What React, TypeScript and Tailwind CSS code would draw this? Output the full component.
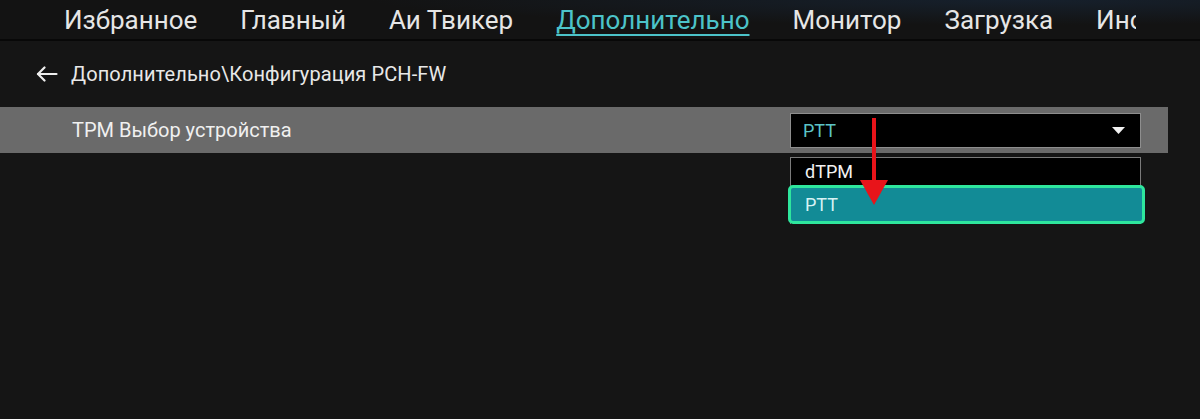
const tabs = [
  { label: "Избранное" },
  { label: "Главный" },
  { label: "Аи Твикер" },
  { label: "Дополнительно", active: true },
  { label: "Монитор" },
  { label: "Загрузка" },
  { label: "Инструменты" },
];

const options = ["dTPM", "PTT"];

export default function App() {
  const selected = "PTT";

  return (
    <div className="relative h-[419px] w-[1200px] overflow-hidden bg-[#151515] font-['Roboto','Noto_Sans',sans-serif] text-[#e8e8e8]">
      {/* Top menu */}
      <header className="h-[41px] border-b-2 border-[#080808] bg-[radial-gradient(ellipse_at_85%_0%,#16202c_0%,#131313_45%)]">
        <nav className="flex h-full w-[1136px] items-center gap-[43px] overflow-hidden whitespace-nowrap pl-[64px] text-[26px] leading-none">
          {tabs.map((tab) => (
            <span
              key={tab.label}
              className={
                tab.active
                  ? "text-[#4cc3c9] underline decoration-2 underline-offset-[5px]"
                  : "text-[#e6e6e6]"
              }
            >
              {tab.label}
            </span>
          ))}
        </nav>
      </header>

      {/* Breadcrumb */}
      <div className="flex h-[66px] items-center pl-[36px] text-[20px] tracking-[0.1px]">
        <svg className="mr-[13px]" width="22" height="16" viewBox="0 0 22 16" fill="none" stroke="#eeeeee" strokeWidth="2.2" strokeLinecap="round" strokeLinejoin="round">
          <path d="M20.5 8H2" />
          <path d="M8.5 1.5 2 8l6.5 6.5" />
        </svg>
        <span>Дополнительно\Конфигурация PCH-FW</span>
      </div>

      {/* Selected setting row */}
      <div className="flex h-[46px] w-[1168px] items-center bg-[#6a6a6a] pl-[72px] pr-[27px] text-[20px]">
        <span className="text-[#f0f0f0]">TPM Выбор устройства</span>
        <div className="relative ml-auto text-[18px]">
          <div className="flex h-[35px] w-[351px] items-center border border-[#8e8e8e] bg-black pl-[12px] pr-[15px]">
            <span className="text-[#5cc4c6]">{selected}</span>
            <svg className="ml-auto" width="13" height="7" viewBox="0 0 13 7">
              <polygon points="0,0 13,0 6.5,7" fill="#f2f2f2" />
            </svg>
          </div>

          {/* Open option list */}
          <div className="absolute left-0 top-[44px] w-[351px] border-x border-t border-[#7a7a7a] bg-black">
            {options.map((opt) =>
              opt === selected ? (
                <div
                  key={opt}
                  className="-ml-[3px] flex h-[39px] w-[357px] items-center rounded-[5px] border-[3px] border-[#2ee69d] bg-[#128b96] pl-[14px] text-[#d8f2f4]"
                >
                  {opt}
                </div>
              ) : (
                <div key={opt} className="flex h-[27px] items-center pl-[14px] text-[#f2f2f2]">
                  {opt}
                </div>
              )
            )}
          </div>
        </div>
      </div>

      {/* Red pointer */}
      <svg className="absolute left-[860px] top-[118px]" width="28" height="88" viewBox="0 0 28 88">
        <rect x="12" y="0" width="4" height="66" fill="#e8141a" />
        <polygon points="0,62 28,62 14,87" fill="#e8141a" />
      </svg>
    </div>
  );
}
